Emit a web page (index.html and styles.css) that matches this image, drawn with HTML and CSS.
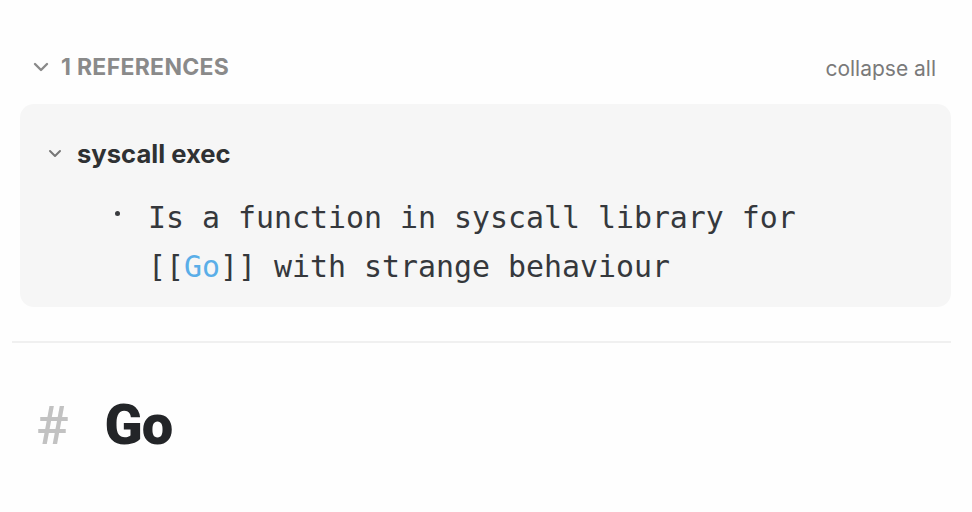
FILE: index.html
```html
<!DOCTYPE html>
<html>
<head>
<meta charset="utf-8">
<link rel="stylesheet" href="styles.css">
</head>
<body>
<div class="page">
  <div class="refs-header">
    <div class="refs-title">
      <svg class="chev" width="16" height="10" viewBox="0 0 16 10"><path d="M2 2 L8 8 L14 2" fill="none" stroke="#8a8a8a" stroke-width="2.4" stroke-linecap="round" stroke-linejoin="round"/></svg>
      <span>1 REFERENCES</span>
    </div>
    <span class="collapse">collapse all</span>
  </div>
  <div class="card">
    <div class="card-title">
      <svg class="chev-sm" width="14" height="9" viewBox="0 0 14 9"><path d="M2 2 L7 7 L12 2" fill="none" stroke="#777" stroke-width="2" stroke-linecap="round" stroke-linejoin="round"/></svg>
      <span>syscall exec</span>
    </div>
    <div class="block">
      <span class="bullet"></span>
      <div class="block-text">Is a function in syscall library for<br>[[<span class="link">Go</span>]] with strange behaviour</div>
    </div>
  </div>
  <hr class="sep">
  <h1 class="title"><span class="hash">#</span><span>Go</span></h1>
</div>
</body>
</html>
```
FILE: styles.css
```css
html, body {
  margin: 0;
  padding: 0;
  background: #fefefe;
}
.page {
  padding: 44px 21px 0 20px;
  font-family: Inter, "Noto Sans", sans-serif;
}
.refs-header {
  display: flex;
  justify-content: space-between;
  align-items: center;
  padding: 0 15px 0 13px;
  height: 45px;
}
.refs-title {
  display: flex;
  align-items: center;
  gap: 12px;
  color: #8a8a8a;
  font-weight: 700;
  font-size: 23px;
  letter-spacing: 0.3px;
}
.collapse {
  color: #7a7a7a;
  font-size: 21px;
  padding-top: 4px;
}
.card {
  margin-top: 15px;
  background: #f6f6f6;
  border-radius: 14px;
  padding: 34px 20px 16px 28px;
}
.card-title {
  display: flex;
  align-items: center;
  gap: 15px;
  font-weight: 700;
  font-size: 25.6px;
  color: #2f3133;
}
.block {
  display: flex;
  margin-top: 24px;
  padding-left: 67px;
}
.bullet {
  width: 5px;
  height: 5px;
  border-radius: 50%;
  background: #3a3c3f;
  margin-top: 18px;
  margin-right: 28px;
  flex: none;
}
.block-text {
  font-family: "DejaVu Sans Mono", "Liberation Mono", monospace;
  font-size: 29.9px;
  line-height: 49px;
  color: #35383c;
}
.link {
  color: #5aaee8;
}
.sep {
  border: none;
  border-top: 2px solid #f0f0f0;
  margin: 34px 0 0 -8px;
}
.title {
  margin: 49px 0 0 16px;
  display: flex;
  align-items: center;
  gap: 36px;
  font-family: Roboto, sans-serif;
  font-weight: 900;
  font-size: 56px;
  letter-spacing: -1px;
  color: #232528;
}
.hash {
  color: #c2c2c2;
  font-family: Roboto, sans-serif;
  font-weight: 500;
  font-size: 54px;
  letter-spacing: 0;
}
```
